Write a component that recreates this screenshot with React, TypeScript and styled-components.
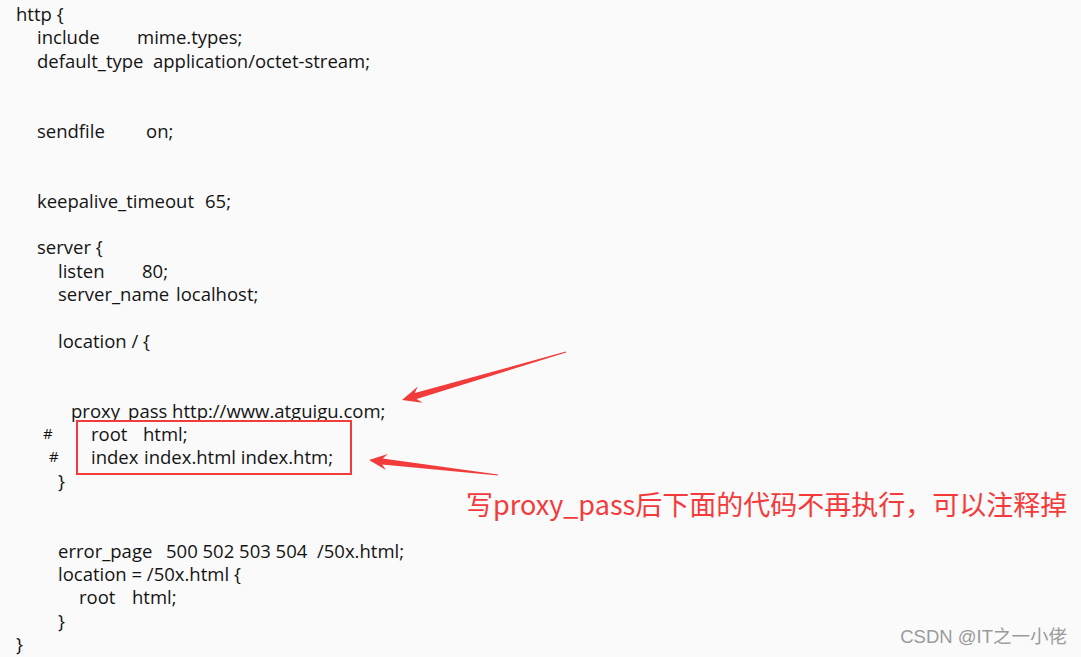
import React from 'react';
import styled, { createGlobalStyle } from 'styled-components';

const GlobalStyle = createGlobalStyle`
    html, body {
        margin: 0;
        padding: 0;
        background: #fafafa;
    }
`;

type Line = {
    indent?: number;
    keyText?: string;
    keyWidth?: number;
    value?: string;
};

const LINE_HEIGHT = 23.33;

const topLines: Line[] = [
    { indent: 16, value: 'http {' },
    { indent: 37, keyText: 'include', keyWidth: 100, value: 'mime.types;' },
    { indent: 37, keyText: 'default_type', keyWidth: 116, value: 'application/octet-stream;' },
    {},
    {},
    { indent: 37, keyText: 'sendfile', keyWidth: 109, value: 'on;' },
    {},
    {},
    { indent: 37, keyText: 'keepalive_timeout', keyWidth: 168, value: '65;' },
    {},
    { indent: 37, value: 'server {' },
    { indent: 58, keyText: 'listen', keyWidth: 84, value: '80;' },
    { indent: 58, keyText: 'server_name', keyWidth: 118, value: 'localhost;' },
    {},
    { indent: 58, value: 'location / {' },
    {},
    {},
    { indent: 71, value: 'proxy_pass http://www.atguigu.com;' },
];

const boxedLines: Line[] = [
    { keyText: 'root', keyWidth: 52, value: 'html;' },
    { keyText: 'index', keyWidth: 53, value: 'index.html index.htm;' },
];

const closingLine: Line = { indent: 58, value: '}' };

const bottomLines: Line[] = [
    {},
    { indent: 58, keyText: 'error_page', keyWidth: 108, value: '500 502 503 504  /50x.html;' },
    { indent: 58, value: 'location = /50x.html {' },
    { indent: 79, keyText: 'root', keyWidth: 53, value: 'html;' },
    { indent: 58, value: '}' },
    { indent: 16, value: '}' },
];

// tapered annotation arrow, from a thin tail to a barbed tip
const arrowPoints = (
    tip: [number, number],
    tail: [number, number],
    headLen: number,
    headHalf: number,
    shaftHalf: number,
    tailHalf: number,
) => {
    const dx = tail[0] - tip[0];
    const dy = tail[1] - tip[1];
    const len = Math.hypot(dx, dy);
    const ux = dx / len;
    const uy = dy / len;
    const px = -uy;
    const py = ux;
    const bx = tip[0] + ux * headLen;
    const by = tip[1] + uy * headLen;
    const nx = tip[0] + ux * headLen * 0.75;
    const ny = tip[1] + uy * headLen * 0.75;
    const pts: [number, number][] = [
        tip,
        [bx + px * headHalf, by + py * headHalf],
        [nx + px * shaftHalf, ny + py * shaftHalf],
        [tail[0] + px * tailHalf, tail[1] + py * tailHalf],
        [tail[0] - px * tailHalf, tail[1] - py * tailHalf],
        [nx - px * shaftHalf, ny - py * shaftHalf],
        [bx - px * headHalf, by - py * headHalf],
    ];
    return pts.map(([x, y]) => `${x.toFixed(1)},${y.toFixed(1)}`).join(' ');
};

const CodeRow: React.FC<{ line: Line }> = ({ line }) => (
    <Row $indent={line.indent ?? 0}>
        {line.keyText && <Key $width={line.keyWidth ?? 0}>{line.keyText}</Key>}
        {line.value}
    </Row>
);

const App: React.FC = () => (
    <Page>
        <GlobalStyle />
        <Code>
            {topLines.map((line, i) => (
                <CodeRow key={`t${i}`} line={line} />
            ))}
            <CommentedBlock>
                <Hashes>
                    <Hash $indent={43}>#</Hash>
                    <Hash $indent={49}>#</Hash>
                </Hashes>
                <HighlightBox>
                    {boxedLines.map((line, i) => (
                        <CodeRow key={`b${i}`} line={line} />
                    ))}
                </HighlightBox>
            </CommentedBlock>
            <CodeRow line={closingLine} />
            <NoteRow>
                <Note>写proxy_pass后下面的代码不再执行，可以注释掉</Note>
            </NoteRow>
            {bottomLines.map((line, i) => (
                <CodeRow key={`d${i}`} line={line} />
            ))}
        </Code>
        <Arrows width="1081" height="657" viewBox="0 0 1081 657">
            <polygon points={arrowPoints([402, 400], [566, 352], 19, 8.5, 3.2, 0.4)} />
            <polygon points={arrowPoints([369, 460], [498, 475], 18, 8, 3, 0.4)} />
        </Arrows>
        <Watermark>CSDN @IT之一小佬</Watermark>
    </Page>
);

const Page = styled.div`
    position: relative;
    width: 1081px;
    height: 657px;
    overflow: hidden;
    background: #fafafa;
`;

const Code = styled.div`
    display: flex;
    flex-direction: column;
    padding-top: 2px;
    font-family: 'Open Sans', 'Noto Sans', sans-serif;
    font-size: 18.5px;
    color: #141414;
`;

const Row = styled.div<{ $indent: number }>`
    height: ${LINE_HEIGHT}px;
    line-height: ${LINE_HEIGHT}px;
    padding-left: ${(p) => p.$indent}px;
    white-space: pre;
`;

const Key = styled.span<{ $width: number }>`
    display: inline-block;
    width: ${(p) => p.$width}px;
`;

const CommentedBlock = styled.div`
    display: flex;
    align-items: flex-start;
`;

const Hashes = styled.div`
    display: flex;
    flex-direction: column;
    width: 76px;
    font-size: 15px;
`;

const Hash = styled.div<{ $indent: number }>`
    height: ${LINE_HEIGHT}px;
    line-height: ${LINE_HEIGHT}px;
    padding-left: ${(p) => p.$indent}px;
`;

const HighlightBox = styled.div`
    width: 259px;
    margin: -2px 0 -7px;
    padding: 0 0 4px 13px;
    border: 2px solid #f23b3b;
`;

const NoteRow = styled.div`
    height: ${LINE_HEIGHT}px;
    padding-left: 466px;
    display: flex;
    align-items: center;
    overflow: visible;
`;

const Note = styled.span`
    font-family: 'Noto Sans CJK SC', 'Noto Sans', sans-serif;
    font-size: 27px;
    line-height: 32px;
    color: #f43a3a;
    white-space: nowrap;
`;

const Arrows = styled.svg`
    position: absolute;
    left: 0;
    top: 0;
    pointer-events: none;
    fill: #f23b3b;
`;

const Watermark = styled.div`
    position: absolute;
    right: 14px;
    bottom: 9px;
    font-family: 'Liberation Sans', 'Noto Sans CJK SC', sans-serif;
    font-size: 18.5px;
    color: #9a9a9a;
`;

export default App;
